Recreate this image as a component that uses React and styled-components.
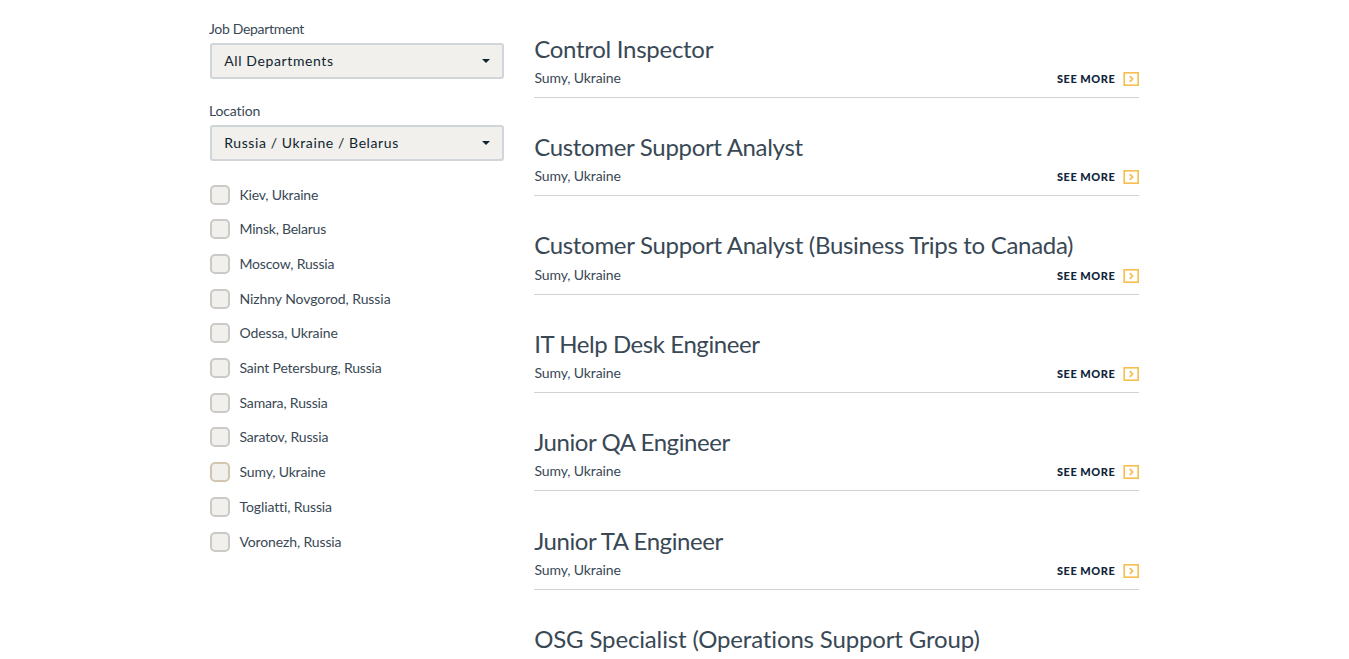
import React from 'react';
import styled, { createGlobalStyle } from 'styled-components';

const GlobalStyle = createGlobalStyle`
  *, *::before, *::after { box-sizing: border-box; }
  html, body { margin: 0; height: 100%; overflow: hidden; background: #fff; }
  body {
    font-family: Lato, 'Noto Sans', sans-serif;
    font-variant-ligatures: none;
    color: #394855;
  }
`;

const Page = styled.main`
  display: flex;
  gap: 30px;
  width: 930px;
  height: 659px;
  margin-left: 209px;
  overflow: hidden;
`;

const Filters = styled.aside`
  flex: 0 0 295px;
  padding-top: 19px;
`;

const Field = styled.div`
  height: 82px;
`;

const Label = styled.div`
  height: 24px;
  font-size: 14px;
  line-height: 20px;
  letter-spacing: ${(p) => p.$spacing}px;
`;

const Select = styled.button`
  display: flex;
  align-items: center;
  justify-content: space-between;
  width: 294px;
  height: 36px;
  margin: 0 0 0 1px;
  padding: 0 12px 0 12.2px;
  border: 2px solid #cfd5d9;
  border-radius: 3px;
  background: #f1f0ec;
  color: #10242f;
  font: 14px/20px Lato, sans-serif;
  letter-spacing: ${(p) => p.$spacing}px;
`;

const Caret = styled.span`
  border: 4px solid transparent;
  border-top-color: #10242f;
  border-bottom: 0;
`;

const Cities = styled.ul`
  margin: 1.65px 0 0 1px;
  padding: 0;
  list-style: none;
`;

const City = styled.li`
  display: flex;
  align-items: center;
  gap: 9.5px;
  height: 20px;
  margin-bottom: 14.6875px;
  font-size: 14px;
  line-height: 20px;
  letter-spacing: ${(p) => p.$spacing}px;
`;

const Checkbox = styled.span`
  width: 20px;
  height: 20px;
  border: 2px solid ${(p) => (p.$warm ? '#d3c6b0' : '#cbcac6')};
  border-radius: 5px;
  background: #f1f0ec;
`;

const Jobs = styled.section`
  flex: 0 0 605px;
  margin-top: -0.4px;
`;

const Job = styled.article`
  height: 98.36px;
  padding-top: 32.14px;
  border-bottom: 1px solid #d0d3d5;
`;

const Title = styled.h2`
  margin: 0 0 1.26px;
  padding-left: 0.2px;
  font-size: 24px;
  line-height: 34px;
  font-weight: 400;
  white-space: nowrap;
  letter-spacing: ${(p) => p.$spacing}px;
`;

const Meta = styled.div`
  display: flex;
  justify-content: space-between;
  height: 22px;
  font-size: 14px;
  line-height: 22px;
`;

const Place = styled.span`
  padding-left: 0.5px;
  letter-spacing: -0.12px;
`;

const More = styled.a`
  display: flex;
  align-items: center;
  gap: 7.8px;
  height: 24px;
  color: #10243a;
  font-size: 11px;
  font-weight: 900;
  letter-spacing: 0.5px;
`;

const Arrow = styled.svg`
  display: block;
  width: 16px;
  height: 14px;
`;

const cities = [
  ['Kiev, Ukraine', -0.19], ['Minsk, Belarus', -0.22], ['Moscow, Russia', -0.18],
  ['Nizhny Novgorod, Russia', -0.07], ['Odessa, Ukraine', -0.12],
  ['Saint Petersburg, Russia', -0.18], ['Samara, Russia', -0.16],
  ['Saratov, Russia', -0.17], ['Sumy, Ukraine', -0.15],
  ['Togliatti, Russia', -0.1], ['Voronezh, Russia', -0.13],
];

const jobs = [
  ['Control Inspector', -0.28], ['Customer Support Analyst', -0.32],
  ['Customer Support Analyst (Business Trips to Canada)', -0.31],
  ['IT Help Desk Engineer', -0.43], ['Junior QA Engineer', -0.43],
  ['Junior TA Engineer', -0.43],
];

export default function App() {
  return (
    <>
      <GlobalStyle />
      <Page>
        <Filters>
          <Field>
            <Label $spacing={-0.32}>Job Department</Label>
            <Select $spacing={0.62}>All Departments<Caret /></Select>
          </Field>
          <Field>
            <Label $spacing={-0.15}>Location</Label>
            <Select $spacing={0.6}>Russia / Ukraine / Belarus<Caret /></Select>
          </Field>
          <Cities>
            {cities.map(([name, spacing]) => (
              <City key={name} $spacing={spacing}>
                <Checkbox $warm={name === 'Sumy, Ukraine'} />
                {name}
              </City>
            ))}
          </Cities>
        </Filters>
        <Jobs>
          {jobs.map(([title, spacing]) => (
            <Job key={title}>
              <Title $spacing={spacing}>{title}</Title>
              <Meta>
                <Place>Sumy, Ukraine</Place>
                <More>
                  SEE MORE
                  <Arrow viewBox="0 0 16 14" fill="none" stroke="#f8bd4f">
                    <rect x="1.2" y="0.8" width="14" height="12.4" strokeWidth="1.6" />
                    <path d="M6.8 4.2 9.6 7 6.8 9.8" strokeWidth="1.7" />
                  </Arrow>
                </More>
              </Meta>
            </Job>
          ))}
          <Job>
            <Title $spacing={-0.15}>OSG Specialist (Operations Support Group)</Title>
          </Job>
        </Jobs>
      </Page>
    </>
  );
}
